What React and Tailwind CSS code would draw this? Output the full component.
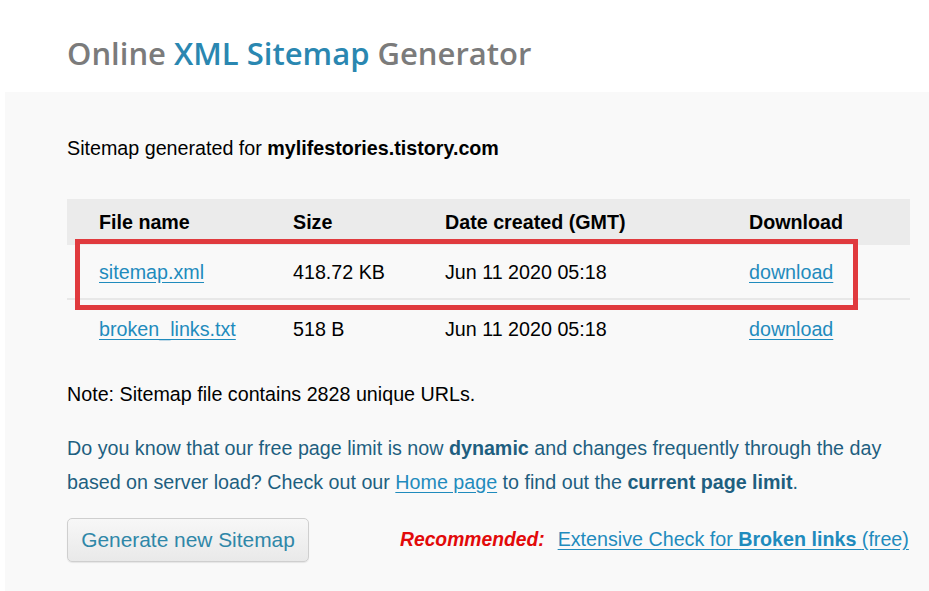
export default function App() {
  const arial = { fontFamily: '"Liberation Sans", Arial, sans-serif' };
  return (
    <div className="w-[929px] h-[591px] overflow-hidden bg-white relative" style={arial}>
      <div className="h-[92px] pl-[67px] pt-[33px]">
        <h1
          className="text-[31px] leading-[40px] font-semibold text-[#7b7b7b]"
          style={{ fontFamily: '"Open Sans", "Noto Sans", sans-serif' }}
        >
          Online <span className="text-[#2a87b1]">XML Sitemap</span> Generator
        </h1>
      </div>
      <div className="ml-[5px] h-[499px] bg-[#f9f9f9] pl-[62px] pr-[19px] pt-[45px]">
        <p className="text-[19.7px] leading-[22px] text-black">
          Sitemap generated for <b>mylifestories.tistory.com</b>
        </p>
        <table className="mt-[40px] w-full text-[19.7px] leading-[22px] text-black border-collapse">
          <thead>
            <tr className="bg-[#ebebeb] h-[46px]">
              <th className="text-left font-bold pl-[32px] w-[226px]">File name</th>
              <th className="text-left font-bold w-[152px]">Size</th>
              <th className="text-left font-bold w-[304px]">Date created (GMT)</th>
              <th className="text-left font-bold">Download</th>
            </tr>
          </thead>
          <tbody>
            <tr className="h-[54px] border-b-2 border-[#e8e8e8]">
              <td className="pl-[32px]"><a className="text-[#1f8bbd] underline underline-offset-[3px]">sitemap.xml</a></td>
              <td>418.72 KB</td>
              <td>Jun 11 2020 05:18</td>
              <td><a className="text-[#1f8bbd] underline underline-offset-[3px]">download</a></td>
            </tr>
            <tr className="h-[58px]">
              <td className="pl-[32px]"><a className="text-[#1f8bbd] underline underline-offset-[3px]">broken_links.txt</a></td>
              <td>518 B</td>
              <td>Jun 11 2020 05:18</td>
              <td><a className="text-[#1f8bbd] underline underline-offset-[3px]">download</a></td>
            </tr>
          </tbody>
        </table>
        <p className="mt-[26px] text-[19.7px] leading-[22px] text-black">
          Note: Sitemap file contains 2828 unique URLs.
        </p>
        <p className="mt-[26px] text-[19.7px] leading-[34px] text-[#1e5f80]">
          Do you know that our free page limit is now <b>dynamic</b> and changes frequently through the day
          <br />
          based on server load? Check out our <a className="text-[#1f8bbd] underline underline-offset-[3px]">Home page</a> to find out the <b>current page limit</b>.
        </p>
        <div className="mt-[19px] flex items-center">
          <button className="h-[44px] w-[242px] rounded-[5px] border border-[#cfcfcf] bg-gradient-to-b from-[#f7f7f7] to-[#e9e9e9] text-[20.9px] text-[#2f87a8] shadow-[0_1px_1px_rgba(0,0,0,0.08)]">
            Generate new Sitemap
          </button>
          <span className="ml-[91px] text-[19.3px] font-bold italic text-[#e20a0a]">Recommended:</span>
          <a className="ml-[13px] text-[19.7px] text-[#1f8bbd] underline underline-offset-[3px]">
            Extensive Check for <b>Broken links </b>(free)
          </a>
        </div>
      </div>
      <div className="absolute left-[75px] top-[239px] w-[783px] h-[71px] border-[5px] border-[#e03a3e] pointer-events-none" />
    </div>
  );
}
